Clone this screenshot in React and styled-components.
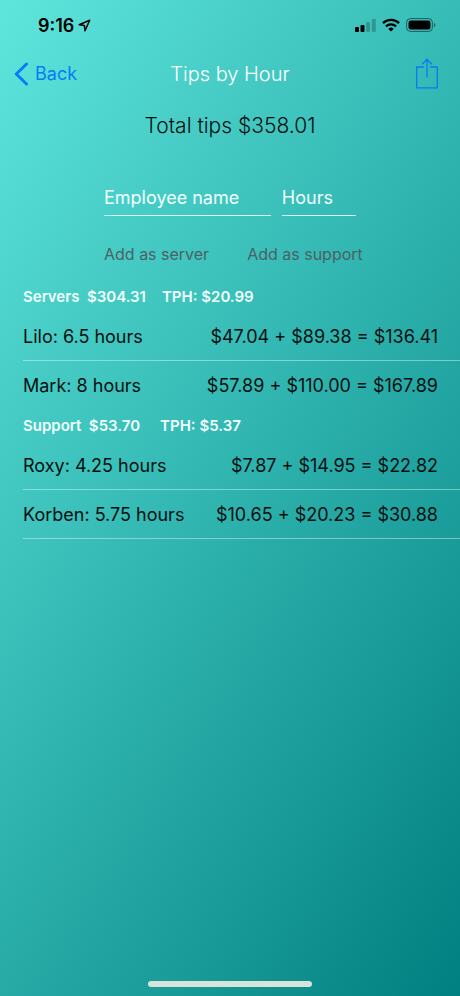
import React, { useState } from 'react';
import styled, { createGlobalStyle } from 'styled-components';

const GlobalStyle = createGlobalStyle`
  * {
    box-sizing: border-box;
  }

  body {
    margin: 0;
    font-family: Inter, Roboto, sans-serif;
    color: #04100f;
  }
`;

const Screen = styled.div`
  min-height: 100vh;
  display: flex;
  flex-direction: column;
  background: linear-gradient(123deg, #5ee6dd, #008080);
`;

const StatusBar = styled.div`
  display: flex;
  align-items: center;
  justify-content: space-between;
  height: 50px;
  padding: 0 24px 0 38px;
`;

const Clock = styled.div`
  display: flex;
  align-items: center;
  gap: 4px;
  font-size: 18px;
  font-weight: 600;
  color: #000;
`;

const StatusIcons = styled.div`
  display: flex;
  align-items: center;
  gap: 6px;
`;

const NavBar = styled.nav`
  display: grid;
  grid-template-columns: 1fr auto 1fr;
  align-items: center;
  height: 47px;
  padding: 0 14px;
`;

const NavButton = styled.button`
  display: flex;
  align-items: center;
  justify-self: ${(props) => props.$side};
  gap: 6px;
  padding: 0 ${(props) => (props.$side === 'end' ? 8 : 0)}px;
  border: none;
  background: none;
  font: inherit;
  font-size: 18px;
  color: #087bf5;
  cursor: pointer;
`;

const Title = styled.h1`
  margin: 0;
  font-size: 20px;
  font-weight: 300;
  color: #fff;
`;

const Total = styled.p`
  margin: 16px 0 0;
  text-align: center;
  font-size: 21px;
  font-weight: 300;
  line-height: 26px;
`;

const Form = styled.form`
  width: 252px;
  margin: 41px auto 0;
`;

const Fields = styled.div`
  display: grid;
  grid-template-columns: 9fr 4fr;
  gap: 11px;
`;

const Field = styled.input`
  min-width: 0;
  height: 36px;
  padding: 0;
  border: none;
  border-bottom: 1px solid #d5f5f2;
  border-radius: 0;
  outline: none;
  background: none;
  font: inherit;
  font-size: 18px;
  color: #fff;

  &::placeholder {
    color: #f0fffd;
    opacity: 1;
  }
`;

const Actions = styled.div`
  display: flex;
  gap: 38px;
  margin-top: 26px;
`;

const AddButton = styled.button`
  flex: none;
  padding: 0;
  border: none;
  background: none;
  font: inherit;
  font-size: 16px;
  line-height: 24px;
  color: #4b6264;
  white-space: nowrap;
`;

const Groups = styled.main`
  flex: 1;
  margin-top: 15px;
  padding-left: 23px;
`;

const GroupHeader = styled.h2`
  display: flex;
  gap: ${(props) => props.$gap}px;
  margin: 0;
  font-size: 15px;
  font-weight: 600;
  line-height: 31px;
  color: #f0fffd;
  white-space: pre;
`;

const List = styled.ul`
  margin: 0;
  padding: 0;
  list-style: none;
`;

const Row = styled.li`
  display: flex;
  align-items: center;
  justify-content: space-between;
  height: 49px;
  padding-right: 22px;
  border-bottom: 1px solid ${(props) => (props.$line ? 'rgba(255, 255, 255, 0.4)' : 'transparent')};
  font-size: 18px;
  white-space: nowrap;
`;

const HomeIndicator = styled.div`
  width: 164px;
  height: 6px;
  margin: 0 auto 9px;
  border-radius: 3px;
  background: #d6e4dc;
`;

const groups = [
  {
    name: 'Servers',
    total: '$304.31',
    tph: '$20.99',
    gap: 16,
    people: [
      { name: 'Lilo', hours: '6.5', sum: '$47.04 + $89.38 = $136.41', line: true },
      { name: 'Mark', hours: '8', sum: '$57.89 + $110.00 = $167.89', line: false },
    ],
  },
  {
    name: 'Support',
    total: '$53.70',
    tph: '$5.37',
    gap: 20,
    people: [
      { name: 'Roxy', hours: '4.25', sum: '$7.87 + $14.95 = $22.82', line: true },
      { name: 'Korben', hours: '5.75', sum: '$10.65 + $20.23 = $30.88', line: true },
    ],
  },
];

const LocationIcon = () => (
  <svg width="13" height="13" viewBox="0 0 13 13" fill="none" stroke="#000" strokeWidth="1.5" strokeLinejoin="round">
    <path d="M11.7 1.2 1.2 5.8l5.2.8.6 5.2z" />
  </svg>
);

const SignalIcon = () => (
  <svg width="21" height="14" viewBox="0 0 21 14">
    <rect x="0" y="9" width="4" height="5" rx="1" />
    <rect x="5.5" y="7" width="4" height="7" rx="1" />
    <rect x="11" y="4" width="4" height="10" rx="1" opacity="0.22" />
    <rect x="16.8" y="1" width="4" height="13" rx="1" opacity="0.22" />
  </svg>
);

const WifiIcon = () => (
  <svg width="18" height="14" viewBox="0 0 18 14" fill="none" stroke="#000" strokeWidth="2.3">
    <path d="M.9 5.2a11.7 11.7 0 0 1 16.2 0" />
    <path d="M3.9 8.4a7.4 7.4 0 0 1 10.2 0" />
    <path d="M9 13.6 6.3 10.9a3.9 3.9 0 0 1 5.4 0z" fill="#000" stroke="none" />
  </svg>
);

const BatteryIcon = () => (
  <svg width="30" height="14" viewBox="0 0 30 14">
    <rect x=".6" y=".6" width="25.8" height="12.8" rx="3.8" fill="none" stroke="#000" strokeOpacity="0.5" />
    <rect x="2.5" y="2.5" width="22" height="9" rx="2.2" />
    <path d="M28 4.8c1.8.8 1.8 3.6 0 4.4z" opacity="0.5" />
  </svg>
);

const BackIcon = () => (
  <svg width="15" height="24" viewBox="0 0 15 24" fill="none" stroke="currentColor" strokeWidth="3" strokeLinecap="round" strokeLinejoin="round">
    <path d="M12.5 2 2.3 12l10.2 10" />
  </svg>
);

const ShareIcon = () => (
  <svg width="22" height="31" viewBox="0 0 22 31" fill="none" stroke="currentColor" strokeWidth="1.3">
    <path d="M7.8 9H.7v20.8h20.6V9h-7.1" />
    <path d="M11 19.5V1.5M6.2 6.2 11 1.3l4.8 4.9" />
  </svg>
);

const App = () => {
  const [employee, setEmployee] = useState('');
  const [hours, setHours] = useState('');

  return (
    <Screen>
      <GlobalStyle />
      <StatusBar>
        <Clock>
          9:16
          <LocationIcon />
        </Clock>
        <StatusIcons>
          <SignalIcon />
          <WifiIcon />
          <BatteryIcon />
        </StatusIcons>
      </StatusBar>
      <NavBar>
        <NavButton type="button" $side="start">
          <BackIcon />
          Back
        </NavButton>
        <Title>Tips by Hour</Title>
        <NavButton type="button" $side="end" aria-label="Share">
          <ShareIcon />
        </NavButton>
      </NavBar>
      <Total>Total tips $358.01</Total>
      <Form onSubmit={(e) => e.preventDefault()}>
        <Fields>
          <Field
            aria-label="Employee name"
            placeholder="Employee name"
            value={employee}
            onChange={(e) => setEmployee(e.target.value)}
          />
          <Field
            aria-label="Hours"
            placeholder="Hours"
            inputMode="decimal"
            value={hours}
            onChange={(e) => setHours(e.target.value)}
          />
        </Fields>
        <Actions>
          <AddButton type="button">Add as server</AddButton>
          <AddButton type="button">Add as support</AddButton>
        </Actions>
      </Form>
      <Groups>
        {groups.map((group) => (
          <section key={group.name}>
            <GroupHeader $gap={group.gap}>
              <span>{`${group.name}  ${group.total}`}</span>
              <span>{`TPH: ${group.tph}`}</span>
            </GroupHeader>
            <List>
              {group.people.map((person) => (
                <Row key={person.name} $line={person.line}>
                  <span>{`${person.name}: ${person.hours} hours`}</span>
                  <span>{person.sum}</span>
                </Row>
              ))}
            </List>
          </section>
        ))}
      </Groups>
      <HomeIndicator />
    </Screen>
  );
};

export default App;
